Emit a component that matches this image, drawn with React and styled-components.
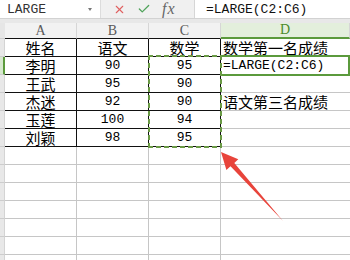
import React from 'react'
import styled, { createGlobalStyle } from 'styled-components'
import { X, Check } from 'lucide-react'

const GlobalStyle = createGlobalStyle`
  html, body {
    margin: 0;
    padding: 0;
    background: #fff;
    overflow: hidden;
  }
`

const GREEN = '#5b9a3c'
const ANTS = '#6a9a45'
const CJK = `"Noto Sans CJK SC", sans-serif`
const MONO = `"Liberation Mono", "Noto Sans CJK SC", monospace`

const Page = styled.div`
  position: relative;
  width: 350px;
  height: 260px;
  overflow: hidden;
  background: #fff;
`

const FormulaBar = styled.div`
  display: flex;
  height: 18px;
  border-bottom: 1px solid #d2d2d2;
`

const NameBox = styled.div`
  position: relative;
  width: 100px;
  display: flex;
  align-items: center;
  padding-left: 7px;
  box-sizing: border-box;
  background: #fff;
  font-family: ${MONO};
  font-size: 13px;
  color: #333;
`

const Caret = styled.span`
  position: absolute;
  right: 8px;
  top: 8px;
  border-left: 2.5px solid transparent;
  border-right: 2.5px solid transparent;
  border-top: 3px solid #777;
`

const Actions = styled.div`
  width: 95px;
  display: flex;
  align-items: center;
  gap: 11px;
  padding-left: 12px;
  box-sizing: border-box;
  background: #f0f0f0;
  border-left: 1px solid #dcdcdc;
  border-right: 1px solid #d6d6d6;
`

const Fx = styled.span`
  font-family: "Liberation Serif", serif;
  font-style: italic;
  font-size: 16px;
  line-height: 16px;
  color: #666;
  letter-spacing: 1px;
`

const FormulaInput = styled.div`
  flex: 1;
  display: flex;
  align-items: center;
  padding-left: 11px;
  background: #fff;
  font-family: ${MONO};
  font-size: 13px;
  color: #111;
`

const Gap = styled.div`
  height: 4px;
  background: #e8e8e8;
`

const Sheet = styled.div`
  display: grid;
  grid-template-columns: 5px 72px 72px 72px 1fr;
  grid-template-rows: 16px repeat(13, 18px);
`

const Corner = styled.div`
  grid-row: 1;
  grid-column: 1;
  background: #e6e6e6;
  border-bottom: 1px solid #cfcfcf;
  box-sizing: border-box;
`

const RowHead = styled.div`
  grid-row: ${(p) => p.$row};
  grid-column: 1;
  box-sizing: border-box;
  background: ${(p) => (p.$active ? '#d7e8cf' : '#e8e8e8')};
  border-bottom: 1px solid #cdcdcd;
  border-right: ${(p) => (p.$active ? `2px solid ${GREEN}` : '1px solid #d4d4d4')};
`

const ColHead = styled.div`
  grid-row: 1;
  grid-column: ${(p) => p.$col};
  box-sizing: border-box;
  display: flex;
  align-items: center;
  justify-content: center;
  font-family: "Liberation Serif", serif;
  font-size: 14px;
  line-height: 14px;
  color: ${(p) => (p.$active ? '#4b8a2c' : '#5a5a5a')};
  background: ${(p) => (p.$active ? '#e3efdc' : '#f2f2f2')};
  border-right: 1px solid #d6d6d6;
  border-bottom: ${(p) =>
    p.$active ? `2px solid ${GREEN}` : p.$table ? '1px solid #111' : '1px solid #cfcfcf'};
`

const Cell = styled.div`
  grid-row: ${(p) => p.$row};
  grid-column: ${(p) => p.$col};
  box-sizing: border-box;
  display: flex;
  align-items: center;
  justify-content: ${(p) => (p.$left ? 'flex-start' : 'center')};
  padding-left: ${(p) => (p.$left ? '2px' : '0')};
  white-space: nowrap;
  font-family: ${(p) => (p.$mono ? MONO : CJK)};
  font-size: ${(p) => (p.$mono ? '13px' : '15px')};
  line-height: 16px;
  color: #000;
  border-right: ${(p) => (p.$table ? '1px solid #111' : p.$last ? 'none' : '1px solid #c6c6c6')};
  border-bottom: ${(p) => (p.$table ? '1px solid #111' : '1px solid #c6c6c6')};
`

const Marquee = styled.div`
  grid-column: 4;
  grid-row: 3 / 8;
  margin: -2px -1px -1px -1px;
  pointer-events: none;
  background:
    repeating-linear-gradient(90deg, ${ANTS} 0 5px, transparent 5px 8px) top left / 100% 2px no-repeat,
    repeating-linear-gradient(90deg, ${ANTS} 0 5px, transparent 5px 8px) bottom left / 100% 2px no-repeat,
    repeating-linear-gradient(180deg, ${ANTS} 0 5px, transparent 5px 8px) top left / 2px 100% no-repeat,
    repeating-linear-gradient(180deg, ${ANTS} 0 5px, transparent 5px 8px) top right / 2px 100% no-repeat;
`

const Selection = styled.div`
  grid-column: 5;
  grid-row: 3;
  margin: -2px 0 -1px 1px;
  border: 2px solid ${GREEN};
  border-left: none;
  pointer-events: none;
`

const Arrow = styled.svg`
  position: absolute;
  left: 0;
  top: 0;
  pointer-events: none;
`

const rows = [
  ['姓名', '语文', '数学', '数学第一名成绩'],
  ['李明', '90', '95', '=LARGE(C2:C6)'],
  ['王武', '95', '90', ''],
  ['杰迷', '92', '90', '语文第三名成绩'],
  ['玉莲', '100', '94', ''],
  ['刘颖', '98', '95', ''],
]

const isLatin = (s) => /^[\x00-\x7f]+$/.test(s)

export default function App() {
  const empty = Array.from({ length: 7 })
  return (
    <Page>
      <GlobalStyle />
      <FormulaBar>
        <NameBox>
          LARGE
          <Caret />
        </NameBox>
        <Actions>
          <X size={13} color="#e06060" strokeWidth={2} />
          <Check size={14} color="#4fa35a" strokeWidth={2.2} />
          <Fx>fx</Fx>
        </Actions>
        <FormulaInput>=LARGE(C2:C6)</FormulaInput>
      </FormulaBar>
      <Gap />
      <Sheet>
        <Corner />
        <ColHead $col={2} $table>A</ColHead>
        <ColHead $col={3} $table>B</ColHead>
        <ColHead $col={4} $table>C</ColHead>
        <ColHead $col={5} $active>D</ColHead>
        {rows.map((r, i) => (
          <React.Fragment key={i}>
            <RowHead $row={i + 2} $active={i === 1} />
            {r.slice(0, 3).map((v, j) => (
              <Cell key={j} $row={i + 2} $col={j + 2} $table $mono={isLatin(v)}>
                {v}
              </Cell>
            ))}
            <Cell $row={i + 2} $col={5} $left $last $mono={isLatin(r[3])}>
              {r[3]}
            </Cell>
          </React.Fragment>
        ))}
        {empty.map((_, i) => (
          <React.Fragment key={`e${i}`}>
            <RowHead $row={i + 8} />
            <Cell $row={i + 8} $col={2} />
            <Cell $row={i + 8} $col={3} />
            <Cell $row={i + 8} $col={4} />
            <Cell $row={i + 8} $col={5} $last />
          </React.Fragment>
        ))}
        <Marquee />
        <Selection />
      </Sheet>
      <Arrow width="350" height="260" viewBox="0 0 350 260">
        <polygon
          points="221,152 238.3,159.3 234.3,162.9 283,221 230.5,166.3 226.4,170"
          fill="#e8443b"
        />
      </Arrow>
    </Page>
  )
}
